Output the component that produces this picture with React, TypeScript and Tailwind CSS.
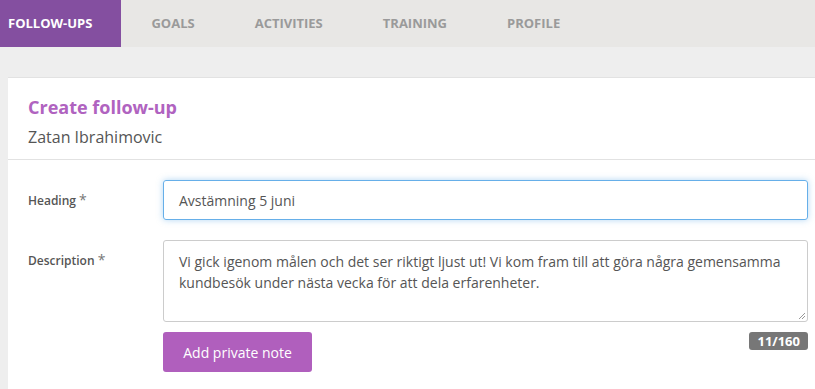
export default function App() {
  const tabs = ['GOALS', 'ACTIVITIES', 'TRAINING', 'PROFILE'];
  return (
    <div className="w-[815px] h-[389px] overflow-hidden bg-[#eeeeee] font-['Open_Sans',sans-serif]">
      {/* Nav */}
      <div className="flex h-[47px] bg-[#e8e7e5]">
        <div className="flex items-center pl-2 pr-[29px] bg-[#844fa0] text-[13px] font-bold text-white">FOLLOW-UPS</div>
        {tabs.map(t => (
          <div key={t} className="flex items-center px-[30px] text-[13px] font-bold text-[#9a9a9a]">{t}</div>
        ))}
      </div>

      {/* Card */}
      <div className="mt-[30px] ml-2 bg-white border-t border-[#e2e2e2] h-[320px]">
        <div className="px-5 pt-[17px] pb-[11px] border-b border-[#e2e2e2]">
          <h1 className="text-[18px] leading-6 font-bold text-[#b063c0]">Create follow-up</h1>
          <p className="mt-[7px] text-[16px] leading-[22px] text-[#555]">Zatan Ibrahimovic</p>
        </div>

        <div className="pl-5 pr-[7px] pt-5">
          <div className="flex">
            <label className="w-[135px] pt-[9px] text-[12px] font-semibold text-[#555]">
              Heading <span className="text-[14px] font-normal text-[#777]">*</span>
            </label>
            <div className="flex-1 h-[40px] flex items-center px-[15px] border border-[#66afe9] rounded-[3px] shadow-[0_0_6px_rgba(102,175,233,0.5)] text-[14px] text-[#555]">
              Avstämning 5 juni
            </div>
          </div>

          <div className="flex mt-[20px]">
            <label className="w-[135px] pt-[9px] text-[12px] font-semibold text-[#555]">
              Description <span className="text-[14px] font-normal text-[#777]">*</span>
            </label>
            <div className="flex-1">
              <div className="relative h-[82px] px-[15px] py-[10px] border border-[#cccccc] rounded-[3px] text-[14px] leading-[21px] text-[#555]">
                Vi gick igenom målen och det ser riktigt ljust ut! Vi kom fram till att göra några gemensamma kundbesök under nästa vecka för att dela erfarenheter.
                <svg className="absolute right-[1px] bottom-[1px]" width="8" height="8" viewBox="0 0 8 8">
                  <line x1="7" y1="1" x2="1" y2="7" stroke="#999" strokeWidth="1" />
                  <line x1="7" y1="4" x2="4" y2="7" stroke="#999" strokeWidth="1" />
                </svg>
              </div>
              <div className="flex justify-between items-start mt-[10px]">
                <button className="h-[40px] w-[149px] rounded-[3px] bg-[#b05fbd] text-[14px] text-white">Add private note</button>
                <span className="h-[18px] px-[8px] rounded-[3px] bg-[#777] text-[13px] leading-[18px] font-bold text-white">11/160</span>
              </div>
            </div>
          </div>
        </div>
      </div>
    </div>
  );
}
